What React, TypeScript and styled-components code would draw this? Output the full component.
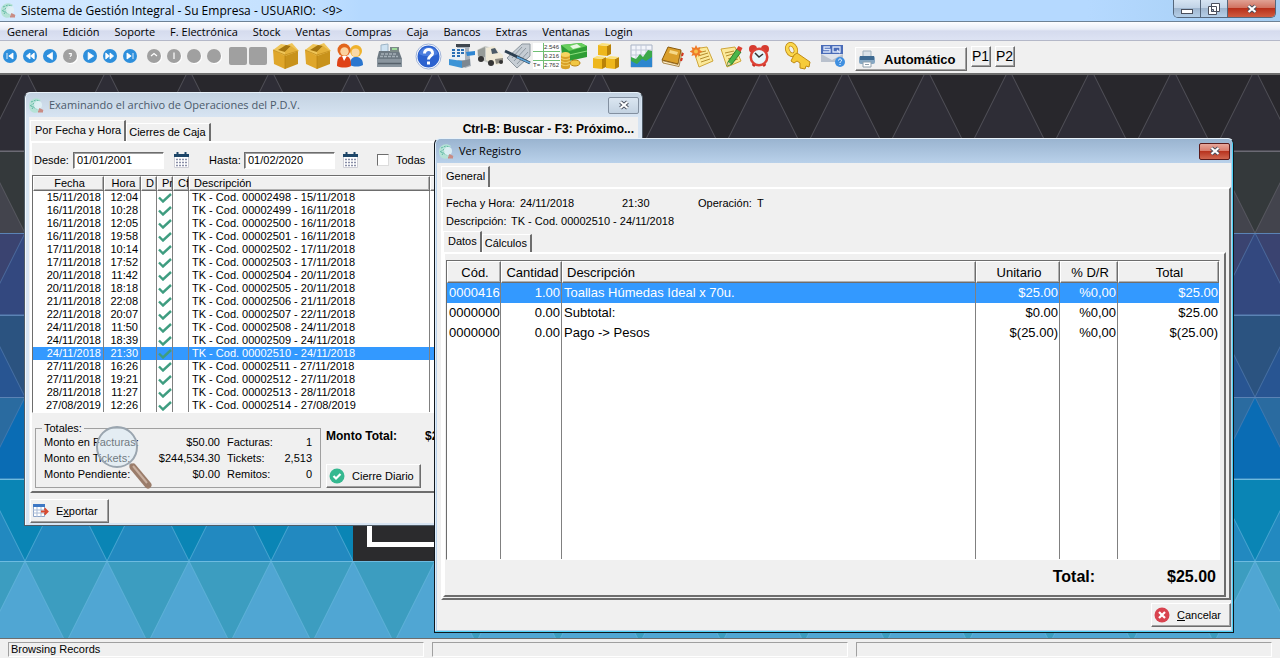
import React from "react";
import styled, { createGlobalStyle, css } from "styled-components";

const SANS = `"Liberation Sans", Arial, sans-serif`;
const SEGOE = `"Open Sans", "Segoe UI", sans-serif`;
const FACE = "#f0f0f0";
const DARK = "#6d6d6d";

const GlobalStyle = createGlobalStyle`
  *, *::before, *::after { box-sizing: border-box; }
  body { margin: 0; font-family: ${SANS}; font-size: 11px; line-height: 13px; color: #000; }
  button, input { font: inherit; color: inherit; }
  table { border-collapse: separate; border-spacing: 0; }
`;

const raised = css`
  border: 1px solid;
  border-color: #fff ${DARK} ${DARK} #fff;
  box-shadow: inset -1px -1px 0 #a0a0a0;
`;

/* ---------- Application frame ---------- */
const Shell = styled.div`
  display: flex;
  flex-direction: column;
  min-height: 100vh;
  background: ${FACE};
  overflow: hidden;
`;
const AppTitle = styled.header`
  display: flex;
  align-items: center;
  height: 22px;
  padding: 0 4px 0 0;
  gap: 4px;
  background: linear-gradient(90deg, #d3e9ff 0, #c4e1ff 300px, #b5d9ff 360px, #b5d9ff 85%, #a4cdf2 100%);
  border-bottom: 1px solid #6d8195;
  font: 12px/16px ${SEGOE};
`;
const TitleText = styled.h1`
  flex: 1;
  margin: 0;
  font: inherit;
  white-space: pre;
`;
const Controls = styled.div`
  align-self: flex-start;
  display: flex;
  height: 18px;
  border: 1px solid #55677c;
  border-top: 0;
  border-radius: 0 0 5px 5px;
  overflow: hidden;
`;
const Control = styled.button<{ $close?: boolean }>`
  display: grid;
  place-items: center;
  width: ${(p) => (p.$close ? 47 : 27)}px;
  padding: 0;
  border: 0;
  border-right: ${(p) => (p.$close ? 0 : 1)}px solid #55677c;
  background: ${(p) =>
    p.$close
      ? "linear-gradient(#e0a194 0, #d0705e 48%, #b8301b 50%, #cf5c40 100%)"
      : "linear-gradient(#d6e4f2 0, #c0d2e6 48%, #9fb6cf 50%, #b5cfe8 100%)"};
`;
const MenuBar = styled.nav`
  display: flex;
  align-items: center;
  gap: 15px;
  height: 19px;
  padding: 2px 7px 0;
  background: linear-gradient(#fdfdff 0, #e9edf7 40%, #d5dbee 50%, #dde3f3 100%);
  border-bottom: 1px solid #b4b8c8;
  font: 11px/16px ${SEGOE};
`;
const MenuItem = styled.button`
  padding: 0;
  border: 0;
  background: none;
  white-space: nowrap;
`;
const ToolBar = styled.div`
  display: flex;
  align-items: center;
  height: 34px;
  padding: 0 2px 2px;
  border-bottom: 2px solid #6d6d6d;
`;
const ToolGroup = styled.div<{ $gap?: number; $before?: number }>`
  display: flex;
  align-items: center;
  gap: ${(p) => p.$gap ?? 0}px;
  margin-left: ${(p) => p.$before ?? 0}px;
`;
const ToolButton = styled.button<{ $w: number }>`
  display: grid;
  place-items: center;
  width: ${(p) => p.$w}px;
  height: 28px;
  padding: 0;
  border: 0;
  background: none;
`;
const GreySquare = styled.button`
  width: 18px;
  height: 18px;
  padding: 0;
  border: 0;
  border-radius: 2px;
  background: #a0a0a0;
`;
const AutoButton = styled.button`
  ${raised}
  display: flex;
  align-items: center;
  gap: 8px;
  width: 112px;
  height: 24px;
  margin: 6px 0 0 10px;
  padding: 0 2px;
  background: ${FACE};
  font-weight: bold;
  font-size: 13px;
`;
const PageButton = styled.button`
  ${raised}
  width: 20px;
  height: 21px;
  padding: 0 1px 0 0;
  background: ${FACE};
  font-size: 14px;
`;

/* ---------- Desktop ---------- */
const Desktop = styled.main`
  position: relative;
  flex: 1;
  min-height: 563px;
  overflow: hidden;
  background: #3c9dc0;
`;
const WallpaperArt = styled.svg`
  position: absolute;
  inset: 0;
  width: 100%;
  height: 100%;
`;

const Window = styled.section<{ $x: number; $y: number; $w: number; $active?: boolean }>`
  position: absolute;
  left: ${(p) => p.$x}px;
  top: ${(p) => p.$y}px;
  width: ${(p) => p.$w}px;
  padding: ${(p) => (p.$active ? "0 2px 2px" : "0 4px 2px")};
  border: 1px solid ${(p) => (p.$active ? "#10161c" : "#4f5b66")};
  border-top-color: #e8f2fa;
  border-radius: 6px 6px 0 0;
  background: ${(p) => (p.$active ? "#b9d1ea" : "#d7e4f2")};
  box-shadow: ${(p) => (p.$active ? "inset -1px -1px 0 #4fd2f5, inset 1px 0 0 #dfeefb" : "inset 1px 0 0 #f2f8fd")};
`;
const WindowBar = styled.header<{ $active?: boolean }>`
  display: flex;
  align-items: center;
  gap: 4px;
  height: 24px;
  margin: 0 ${(p) => (p.$active ? -1 : -3)}px;
  padding: 0 2px;
  border-radius: 5px 5px 0 0;
  background: ${(p) => (p.$active ? "linear-gradient(#9ab4d0, #b9d1ea)" : "linear-gradient(#c3d2e1, #d7e4f2)")};
  color: ${(p) => (p.$active ? "#000" : "#4b5a6b")};
  font: 11px/16px ${SEGOE};
`;
const WindowTitle = styled.h2`
  flex: 1;
  margin: 0;
  font: inherit;
`;
const CloseButton = styled.button<{ $active?: boolean }>`
  display: grid;
  place-items: center;
  width: 31px;
  height: 17px;
  padding: 0;
  border: 1px solid ${(p) => (p.$active ? "#5a1a1a" : "#8390a0")};
  border-radius: 2px;
  background: ${(p) =>
    p.$active ? "linear-gradient(#e7a79b 0, #d97d6d 45%, #b8341f 50%, #d0664f 100%)" : "linear-gradient(#dbe6f1, #c3d2e1)"};
`;
const Client = styled.div<{ $pad: string }>`
  padding: ${(p) => p.$pad};
  background: ${FACE};
`;
const TabRow = styled.div`
  display: flex;
  align-items: flex-end;
`;
const Tab = styled.button<{ $active?: boolean }>`
  height: ${(p) => (p.$active ? 21 : 18)}px;
  padding: ${(p) => (p.$active ? "0 3px 1px 4px" : "0 3px 0 2px")};
  border: 1px solid #fff;
  border-bottom: 0;
  border-right: 2px solid ${DARK};
  background: ${FACE};
  white-space: nowrap;
`;
const Panel = styled.div<{ $pad: string }>`
  padding: ${(p) => p.$pad};
  border: 2px solid;
  border-color: #fff ${DARK} ${DARK} #fff;
`;
const Hint = styled.strong`
  margin: 0 3px 5px auto;
  font-size: 12px;
`;
const Row = styled.div<{ $gap?: number; $h?: number; $indent?: number }>`
  display: flex;
  align-items: center;
  gap: ${(p) => p.$gap ?? 0}px;
  height: ${(p) => p.$h ?? 18}px;
  padding-left: ${(p) => p.$indent ?? 0}px;
`;
const DateInput = styled.input`
  width: 91px;
  height: 17px;
  padding: 0 3px;
  border: 1px solid;
  border-color: ${DARK} #fff #fff ${DARK};
  box-shadow: inset 1px 1px 0 #a0a0a0;
  background: #fff;
`;
const CalendarButton = styled.button`
  display: grid;
  place-items: center;
  width: 16px;
  height: 18px;
  padding: 0;
  border: 0;
  background: none;
`;
const Tick = styled.input`
  appearance: none;
  width: 12px;
  height: 12px;
  margin: 0;
  border: 1px solid;
  border-color: ${DARK} #dcdcdc #dcdcdc ${DARK};
  background: #fff;
`;

/* ---------- Grids ---------- */
const GridTable = styled.table<{ $large?: boolean }>`
  table-layout: fixed;
  width: 100%;
  margin-top: 6px;
  background: #fff;
  border: 1px solid;
  border-color: ${DARK} #fff #fff ${DARK};
  font-size: ${(p) => (p.$large ? 13 : 11)}px;
  line-height: ${(p) => (p.$large ? 20 : 13)}px;
  th {
    height: ${(p) => (p.$large ? 22 : 15)}px;
    padding: 0 2px 0 4px;
    border: 1px solid;
    border-color: #fff ${DARK} ${DARK} #fff;
    box-shadow: inset -1px -1px 0 #b0b0b0;
    background: ${FACE};
    font-weight: normal;
    line-height: 13px;
    overflow: hidden;
    white-space: nowrap;
  }
  td {
    height: ${(p) => (p.$large ? 20 : 13)}px;
    padding: ${(p) => (p.$large ? "0 1px 0 2px" : "0 2px 0 3px")};
    border-right: 1px solid #808080;
    overflow: hidden;
    white-space: nowrap;
  }
  td:last-child { border-right: 0; }
`;
const DataRow = styled.tr<{ $selected?: boolean }>`
  ${(p) => p.$selected && css`background: #3399ff; color: #fff;`}
`;
const Cell = styled.td<{ $right?: boolean }>`
  text-align: ${(p) => (p.$right ? "right" : "left")};
`;
const MarkCell = styled.td`
  && { padding: 0; }
  svg { display: block; margin: 0 auto; }
`;
const Head = styled.th<{ $left?: boolean }>`
  text-align: ${(p) => (p.$left ? "left" : "center")};
`;
const Filler = styled.tr`
  td { height: 216px; }
`;

/* ---------- Totals ---------- */
const TotalsArea = styled.div`
  position: relative;
  display: flex;
  gap: 5px;
  margin-top: 9px;
  padding-left: 3px;
`;
const Totals = styled.fieldset`
  width: 286px;
  height: 66px;
  margin: 0;
  padding: 0 8px;
  border: 1px solid #a0a0a0;
  legend { padding: 0 2px; margin-left: -2px; }
`;
const TotalsGrid = styled.dl`
  display: grid;
  grid-template-columns: 92px 84px 50px 1fr;
  grid-auto-rows: 16px;
  margin: 1px 0 0;
  dt { white-space: nowrap; }
  dd { margin: 0; text-align: right; }
  dt:nth-of-type(even) { padding-left: 7px; }
`;
const Side = styled.div`
  display: flex;
  flex-direction: column;
  justify-content: space-between;
  align-items: flex-start;
  padding-top: 8px;
`;
const Amount = styled.strong`
  display: flex;
  gap: 28px;
  font-size: 12px;
`;
const ActionButton = styled.button<{ $w: number }>`
  ${raised}
  display: flex;
  align-items: center;
  gap: 7px;
  width: ${(p) => p.$w}px;
  height: 24px;
  padding: 0 2px;
  background: ${FACE};
`;
const Magnifier = styled.svg`
  position: absolute;
  left: 62px;
  top: 2px;
`;
const Footer = styled.div<{ $end?: boolean }>`
  display: flex;
  justify-content: ${(p) => (p.$end ? "flex-end" : "flex-start")};
  padding: ${(p) => (p.$end ? "3px 0 0" : "6px 0 0")};
`;
const Field = styled.span<{ $w: number }>`
  display: inline-block;
  width: ${(p) => p.$w}px;
  white-space: nowrap;
`;
const GrandTotal = styled.div`
  display: flex;
  justify-content: flex-end;
  gap: 72px;
  padding: 7px 4px 8px 0;
  font: bold 16px/20px ${SANS};
`;

/* ---------- Status bar ---------- */
const StatusBar = styled.footer`
  display: flex;
  gap: 8px;
  height: 21px;
  padding: 3px 8px 2px;
  border-top: 1px solid #6d6d6d;
`;
const StatusCell = styled.div`
  flex: 1;
  padding: 0 2px;
  border: 1px solid;
  border-color: #a0a0a0 #fff #fff #a0a0a0;
`;

/* ---------- Drawings ---------- */
const ROWS = [
  { base: "#28272c", tri: "#2e2d36", up: true },
  { base: "#43444d", tri: "#34393b", up: false },
  { base: "#3a4370", tri: "#33487f", up: true },
  { base: "#285592", tri: "#2b5380", up: false },
  { base: "#2a6ba0", tri: "#0a6cb4", up: true },
  { base: "#2289c0", tri: "#0a85b5", up: false },
  { base: "#3c9dc0", tri: "#50a6d3", up: true },
];
const COLS = Array.from({ length: 32 }, (_, i) => i * 82 - 57);

function Wallpaper() {
  return (
    <WallpaperArt aria-hidden="true">
      {ROWS.map((r, i) => {
        const top = i * 82 - 6;
        const line = i < 2 ? "#6b6a74" : i < 5 ? "#5b83b5" : "#6dbbe0";
        return (
          <g key={i}>
            <rect x="0" y={top} width="100%" height="82" fill={r.base} />
            {COLS.map((x) => (
              <polygon
                key={x}
                points={r.up ? `${x},${top} ${x + 41},${top + 82} ${x - 41},${top + 82}` : `${x},${top + 82} ${x + 41},${top} ${x - 41},${top}`}
                fill={r.tri}
                stroke={line}
                strokeWidth="1"
                strokeOpacity="0.6"
              />
            ))}
            <rect x="0" y={top} width="100%" height="1" fill={line} />
          </g>
        );
      })}
      <rect x="353" y="380" width="300" height="106" fill="#2b2b2d" />
      <path d="M369.500 380V469.500H640" fill="none" stroke="#fff" strokeWidth="5" />
    </WallpaperArt>
  );
}

const AppLogo = () => (
  <svg width="17" height="17" viewBox="0 0 17 17" aria-hidden="true">
    <path d="M13 3C8-1 1 2 1 8.500S6 17 11 15L9 8z" fill="#b5e2d6" />
    <path d="M3 5l5-2 4 1M2 9l6-4M4 12l5-7M3 9l6 3" stroke="#5fb8a4" strokeWidth="1" fill="none" strokeDasharray="2 1" />
    <circle cx="10" cy="8" r="4" fill="#e0f1f5" opacity=".9" />
    <path d="M11 12l4 2M10 14.500h5" stroke="#c98c84" strokeWidth="2" />
  </svg>
);

const Cross = () => (
  <svg width="12" height="10" viewBox="0 0 12 10" aria-hidden="true">
    <path d="M2.500 2l7 6M9.500 2l-7 6" stroke="#4a4f5c" strokeWidth="4" />
    <path d="M2.500 2l7 6M9.500 2l-7 6" stroke="#fff" strokeWidth="2.200" />
  </svg>
);

const NAV: Record<string, string> = {
  first: "M4.500 4.500v5M9.500 4.500L6 7l3.500 2.500z",
  back: "M7 4.500L4 7l3 2.500zM10.500 4.500L7.500 7l3 2.500z",
  prev: "M9 4L4.500 7 9 10z",
  ask: "M6 5h2v1.500L7 7.500M7 9v.5",
  next: "M5.500 4L10 7l-4.500 3z",
  fwd: "M3.500 4.500L6.500 7l-3 2.500zM7 4.500L10 7 7 9.500z",
  last: "M9.500 4.500v5M4.500 4.500L8 7 4.500 9.500z",
  up: "M4.500 7L7 5l2.500 2",
  down: "M6.500 4.500h.5v5",
  dot: "",
};
const NavIcon = ({ kind, grey }: { kind: string; grey?: boolean }) => {
  const outline = kind === "ask" || kind === "up" || kind === "down";
  return (
    <svg width="16" height="16" viewBox="0 0 16 16" aria-hidden="true">
      {grey && <circle cx="9" cy="9" r="7" fill="#fff" />}
      <circle cx="8" cy="8" r="7" fill={grey ? "#a0a0a0" : "#2e8fdc"} />
      <path transform="translate(-.4 -.4) scale(1.2)" d={NAV[kind]} fill={outline ? "none" : "#fff"} stroke="#fff" strokeWidth={outline ? 1 : 0.7} />
    </svg>
  );
};

const BoxIcon = () => (
  <svg width="28" height="28" viewBox="0 0 28 28">
    <path d="M1 8l12 5v14L2 22z" fill="#dfa62a" />
    <path d="M13 13l13-4v13l-13 5z" fill="#c8921b" />
    <path d="M1 8L9 2l6 1 5-2 7 8-14 5z" fill="#efc558" />
    <path d="M6 8l8-5 5 1-6 6z" fill="#a3740f" />
    <path d="M13 10l6-6 7 5-13 4z" fill="#e4b13a" />
    <path d="M1 8l12 5 13-4M13 13v14" stroke="#b98210" fill="none" strokeOpacity=".7" />
  </svg>
);
const PeopleIcon = () => (
  <svg width="28" height="26" viewBox="0 0 28 26">
    <circle cx="20" cy="8" r="6" fill="#efb22c" />
    <circle cx="19.500" cy="9.500" r="4" fill="#f9d9a6" />
    <path d="M14 22c0-7 3-8 6-8s7 1 7 8c-4 2-9 2-13 0z" fill="#2b76cf" />
    <circle cx="8" cy="7" r="6.500" fill="#e2661c" />
    <circle cx="8.500" cy="8.500" r="4.200" fill="#fbd3a0" />
    <path d="M1 23c0-8 2-10 7-10s7 2 7 10c-4 2-10 2-14 0z" fill="#df4216" />
    <path d="M6 13l2 5 3-5z" fill="#fff" />
  </svg>
);
const RegisterIcon = () => (
  <svg width="28" height="26" viewBox="0 0 28 26">
    <path d="M5 9V2l7-1v8z" fill="#cfe3f2" stroke="#9db4c6" />
    <path d="M3 8h20l3 8v8H1v-8z" fill="#6d7982" />
    <path d="M14 4h9v5h-9z" fill="#7c8a88" />
    <path d="M16 5h5v2h-5z" fill="#9edb9a" />
    <path d="M5 11h16M4 13.500h18" stroke="#a5b0b8" strokeWidth="1.500" strokeDasharray="3 1" />
    <path d="M1 16h25v8H1z" fill="#8a959e" />
    <path d="M2 20.500h23" stroke="#56616a" strokeWidth="1.500" />
  </svg>
);
const HelpIcon = () => (
  <svg width="27" height="27" viewBox="0 0 27 27">
    <circle cx="13.500" cy="13.500" r="12.500" fill="#fff" stroke="#9fb3d8" />
    <circle cx="13.500" cy="13.500" r="11" fill="#2c62cf" />
    <path d="M4 11c2-9 17-9 19 0-5 3-14 3-19 0z" fill="#5a8ae6" opacity=".7" />
    <path d="M9.500 10.500c0-5.500 8.500-5.500 8 0-.3 2.500-4 2.500-4 6M13.500 18.500v3" stroke="#fff" strokeWidth="3" fill="none" />
  </svg>
);
const PosIcon = () => (
  <svg width="28" height="26" viewBox="0 0 28 26">
    <path d="M9 1h13l-1 6 2 16-6 2-8-8z" fill="#a9b1ba" />
    <path d="M8 1h14v3H8z" fill="#3f464e" />
    <path d="M3 5h14v12H3z" fill="#e9eff4" />
    <path d="M4 7h3M9 7h3M13 7h3M4 10h3M9 10h3M13 10h3M4 13h3M9 13h3" stroke="#2b6fb4" strokeWidth="2" />
    <path d="M1 16l13 2v7L1 22z" fill="#3d94d6" />
    <path d="M14 18l8-2v6l-8 3z" fill="#7d8791" />
    <path d="M18 9l9-1v4l-8 1z" fill="#2f86d2" />
  </svg>
);
const TruckIcon = () => (
  <svg width="28" height="24" viewBox="0 0 28 24">
    <path d="M1 6l8-4 8 2v12l-5 3L2 14z" fill="#c9cbc6" />
    <path d="M2 6l7-3v10l-7-1z" fill="#979c98" />
    <path d="M10 4l8-2 5 6 4 3v8l-6 2-11-5z" fill="#efe9d6" />
    <path d="M15 5l4-1 3 5-6 1z" fill="#4c5a66" />
    <circle cx="15" cy="19" r="3" fill="#353535" />
    <circle cx="5" cy="15" r="3" fill="#353535" />
    <path d="M19 15l8-1v4l-7 2z" fill="#8d8a80" />
    <circle cx="25" cy="18" r="2" fill="#333" />
  </svg>
);
const CheckIcon = () => (
  <svg width="28" height="26" viewBox="0 0 28 26">
    <path d="M3 15L18 1h8v12L13 25z" fill="#c6cdd4" stroke="#8d979f" />
    <path d="M8 15l10-11M10 18L22 5M13 21L24 9" stroke="#8f99a2" />
    <path d="M1 8l25 12" stroke="#2d3f50" strokeWidth="3" />
    <path d="M13 14l13 6" stroke="#5fa7dc" strokeWidth="1.500" />
  </svg>
);
const SumIcon = () => (
  <svg width="27" height="26" viewBox="0 0 27 26" fontFamily="Liberation Sans" fontSize="6" fill="#333">
    <rect width="27" height="26" fill="#fff" />
    <path d="M0 8.500h27M0 17.500h27M10.500 0v26" stroke="#6fbf73" />
    <text x="11" y="6">2.546</text>
    <text x="11" y="15">0.216</text>
    <text x="0" y="24">T=</text>
    <text x="11" y="24">2.762</text>
  </svg>
);
const MoneyIcon = () => (
  <svg width="28" height="27" viewBox="0 0 28 27">
    <path d="M1 2l20-2 6 3v11l-18 4-7-5z" fill="#2f9d35" />
    <path d="M1 2l20-2 6 3-18 5z" fill="#68cf5d" />
    <path d="M10 3l7-2 4 3-8 2z" fill="#e9f8e3" />
    <path d="M9 12l18-4" stroke="#8ee07f" />
    <path d="M1 12c0-3 9-3 9 0v12c0 3-9 3-9 0z" fill="#d9a127" />
    <path d="M1 15c2 2 7 2 9 0M1 18c2 2 7 2 9 0M1 21c2 2 7 2 9 0" stroke="#f3d36a" fill="none" />
    <ellipse cx="15" cy="20" rx="5" ry="3" fill="#f1c744" stroke="#b98210" />
    <ellipse cx="5.500" cy="11.500" rx="4.500" ry="2.500" fill="#f7d560" />
  </svg>
);
const CratesIcon = () => (
  <svg width="28" height="26" viewBox="0 0 28 26">
    {[[6, 0], [1, 13], [14, 13]].map(([x, y]) => (
      <g key={x} transform={`translate(${x} ${y})`}>
        <path d="M0 2l9 1v10l-9-1z" fill="#eeb71c" />
        <path d="M9 3l4-2v10l-4 2z" fill="#b98208" />
        <path d="M0 2l4-2 9 1-4 2z" fill="#fbe17a" />
      </g>
    ))}
  </svg>
);
const ChartIcon = () => (
  <svg width="23" height="24" viewBox="0 0 23 24">
    <path d="M1 1h21v22H1z" fill="#f3f5fb" stroke="#a8b2c4" />
    <path d="M6 1v14M11 1v14M16 1v14M1 6h21M1 11h21" stroke="#c2c9d8" />
    <path d="M1 15l5 2 5-4 5 1 6-5v14H1z" fill="#2c86cf" />
    <path d="M1 13l5 2 4-5 3 3 5-7 4 1v6l-6 4-4-2-5 5-6-3z" fill="#3ba94a" />
  </svg>
);
const BookIcon = () => (
  <svg width="24" height="22" viewBox="0 0 24 22">
    <path d="M7 2l13 3-3 14-16-4z" fill="#dba02c" stroke="#8a5a0c" />
    <path d="M1 15.500l16 4 3-13 1 1-3 14L2 18z" fill="#fff2cf" stroke="#8a5a0c" strokeWidth=".7" />
    <path d="M9 5l8 2-1 3-8-2z" fill="#f6d98a" />
    <path d="M22 8l-1 3M21 13l-1 3" stroke="#d5341e" strokeWidth="2" fill="none" />
  </svg>
);
const NoteIcon = ({ pencil }: { pencil?: boolean }) => (
  <svg width="25" height="23" viewBox="0 0 25 23">
    <path d="M3 4l14-2 6 14-14 6z" fill="#fbe99a" stroke="#cfa63a" />
    <path d="M7 8l9-2M8 11l10-3M10 14l9-3M11 17l9-3" stroke="#b58d2d" />
    {pencil ? (
      <>
        <path d="M10 17l9-13 4 3-9 12-5 2z" fill="#4cb648" stroke="#2d7d2b" />
        <path d="M18.500 4l2-3 4 2-2 4z" fill="#dc4030" />
        <path d="M10 17l-1 4 4-2z" fill="#f2d2a0" />
      </>
    ) : (
      <>
        <path d="M6 0l1.500 3 3-1-1 3 3 1.500-3 1.500 1 3-3-1L6 13l-1.500-3-3 1 1-3-3-1.500 3-1.500-1-3 3 1z" fill="#ef7b29" />
        <circle cx="6" cy="6.500" r="2" fill="#f7c04b" />
      </>
    )}
  </svg>
);
const ClockIcon = () => (
  <svg width="22" height="24" viewBox="0 0 22 24">
    <circle cx="5" cy="5" r="4" fill="#d63b2f" />
    <circle cx="17" cy="5" r="4" fill="#d63b2f" />
    <path d="M5 22l3-4M17 22l-3-4" stroke="#c4281e" strokeWidth="3" />
    <circle cx="11" cy="13" r="9.500" fill="#dd4337" />
    <circle cx="11" cy="13" r="7" fill="#e6f6fb" />
    <path d="M7 9l4 4 4-3" stroke="#333" strokeWidth="1.500" fill="none" />
  </svg>
);
const KeyIcon = () => (
  <svg width="28" height="28" viewBox="0 0 28 28">
    <ellipse cx="7.500" cy="7.500" rx="4" ry="5.500" transform="rotate(-25 7.500 7.500)" fill="none" stroke="#c08b14" strokeWidth="4.500" />
    <ellipse cx="7.500" cy="7.500" rx="4" ry="5.500" transform="rotate(-25 7.500 7.500)" fill="none" stroke="#fbd84e" strokeWidth="3" />
    <path d="M10 13l3-2 13 9-1 5-3-1-1 3-5-1v-5l-3-2-3 2-3-2z" fill="#f6cb3a" stroke="#c08b14" />
  </svg>
);
const SupportIcon = () => (
  <svg width="25" height="24" viewBox="0 0 25 24">
    <path d="M0 9h22v9H0z" fill="#b9c1cd" />
    <path d="M0 10l11 6 11-6" fill="#dfe4ec" />
    <path d="M0 1h22v9H0z" fill="#4a6cb8" />
    <path d="M9 3H3v2.500h6V8H2M12 3h7v5h-7zM16 6l3 3" stroke="#dce6fa" fill="none" strokeWidth="1.300" />
    <circle cx="19" cy="18" r="5" fill="#3f8fe0" />
    <path d="M17.500 16.500c0-2 3-2 3 0 0 1-1.500 1-1.500 2.500M19 20v1" stroke="#fff" fill="none" />
  </svg>
);
const PrinterIcon = () => (
  <svg width="18" height="18" viewBox="0 0 18 18" aria-hidden="true">
    <path d="M5 1h8v6H5z" fill="#dbe3e9" stroke="#9fb0bd" />
    <rect x="1" y="6" width="16" height="8" rx="2" fill="#86a7c2" />
    <path d="M2 6h14v4H2z" fill="#3e6a91" />
    <path d="M5 12h8v5H5z" fill="#fff" stroke="#8fa0ad" />
    <path d="M7 14.500h4" stroke="#8fa0ad" />
  </svg>
);
const CalendarIcon = () => (
  <svg width="15" height="16" viewBox="0 0 15 16" aria-hidden="true">
    <path d="M0 2h15v3H0z" fill="#1e4668" />
    <path d="M3.500 0v3M11.500 0v3" stroke="#1e4668" strokeWidth="2" />
    <path d="M.5 5v10.500h14V5" fill="#fff" stroke="#cfcfd6" />
    <path d="M2 7.500h11M2 10.500h11M2 13.500h11" stroke="#8a8fa8" strokeWidth="1.500" strokeDasharray="2 1" />
  </svg>
);
const GreenTick = () => (
  <svg width="14" height="10" viewBox="0 0 14 10" aria-label="Sí">
    <path d="M1 4.500l4 4L13 1" fill="none" stroke="#3f9d80" strokeWidth="2.400" />
  </svg>
);
const Badge = ({ ok }: { ok?: boolean }) => (
  <svg width="16" height="16" viewBox="0 0 16 16" aria-hidden="true">
    <circle cx="8" cy="8" r="7.500" fill={ok ? "#35b890" : "#d8434f"} />
    <path d={ok ? "M4.500 8l2.500 2.500L11.500 6" : "M5 5l6 6M11 5l-6 6"} stroke="#fff" strokeWidth="2.200" fill="none" />
  </svg>
);
const ExportIcon = () => (
  <svg width="16" height="14" viewBox="0 0 16 14" aria-hidden="true">
    <path d="M.5.5h11v12H.5z" fill="#fff" stroke="#8ca4c8" />
    <path d="M0 0h12v3H0z" fill="#3e78c4" />
    <path d="M0 6h12M0 9h12M4 3v10M8 3v10" stroke="#a9bbd6" />
    <path d="M8 7.500h5M11.500 4.500l3 3-3 3" stroke="#d8492f" strokeWidth="2" fill="none" />
  </svg>
);

/* ---------- Data ---------- */
const MENUS = ["General", "Edición", "Soporte", "F. Electrónica", "Stock", "Ventas", "Compras", "Caja", "Bancos", "Extras", "Ventanas", "Login"];
const TOOLS: { name: string; w: number; before: number; icon: React.ReactNode }[] = [
  { name: "Artículos", w: 28, before: 5, icon: <BoxIcon /> },
  { name: "Depósito", w: 28, before: 4, icon: <BoxIcon /> },
  { name: "Clientes", w: 28, before: 4, icon: <PeopleIcon /> },
  { name: "Caja", w: 28, before: 12, icon: <RegisterIcon /> },
  { name: "Ayuda", w: 28, before: 10, icon: <HelpIcon /> },
  { name: "Punto de venta", w: 28, before: 6, icon: <PosIcon /> },
  { name: "Remitos", w: 28, before: 0, icon: <TruckIcon /> },
  { name: "Cheques", w: 28, before: 0, icon: <CheckIcon /> },
  { name: "Sumas", w: 28, before: 0, icon: <SumIcon /> },
  { name: "Pagos", w: 28, before: 0, icon: <MoneyIcon /> },
  { name: "Stock", w: 28, before: 4, icon: <CratesIcon /> },
  { name: "Estadísticas", w: 24, before: 9, icon: <ChartIcon /> },
  { name: "Agenda", w: 24, before: 8, icon: <BookIcon /> },
  { name: "Notas", w: 24, before: 5, icon: <NoteIcon /> },
  { name: "Editar", w: 24, before: 4, icon: <NoteIcon pencil /> },
  { name: "Alarma", w: 24, before: 5, icon: <ClockIcon /> },
  { name: "Claves", w: 28, before: 13, icon: <KeyIcon /> },
  { name: "Soporte", w: 24, before: 9, icon: <SupportIcon /> },
];
const OPERATIONS: [string, string, string][] = [
  ["15/11/2018", "12:04", "00002498"],
  ["16/11/2018", "10:28", "00002499"],
  ["16/11/2018", "12:05", "00002500"],
  ["16/11/2018", "19:58", "00002501"],
  ["17/11/2018", "10:14", "00002502"],
  ["17/11/2018", "17:52", "00002503"],
  ["20/11/2018", "11:42", "00002504"],
  ["20/11/2018", "18:18", "00002505"],
  ["21/11/2018", "22:08", "00002506"],
  ["22/11/2018", "20:07", "00002507"],
  ["24/11/2018", "11:50", "00002508"],
  ["24/11/2018", "18:39", "00002509"],
  ["24/11/2018", "21:30", "00002510"],
  ["27/11/2018", "16:26", "00002511"],
  ["27/11/2018", "19:21", "00002512"],
  ["28/11/2018", "11:27", "00002513"],
  ["27/08/2019", "12:26", "00002514"],
];
const LINES = [
  ["0000416", "1.00", "Toallas Húmedas Ideal x 70u.", "$25.00", "%0,00", "$25.00"],
  ["0000000", "0.00", "Subtotal:", "$0.00", "%0,00", "$25.00"],
  ["0000000", "0.00", "Pago -> Pesos", "$(25.00)", "%0,00", "$(25.00)"],
];

/* ---------- Windows ---------- */
function OperationsWindow() {
  return (
    <Window $x={24} $y={17} $w={619}>
      <WindowBar>
        <AppLogo />
        <WindowTitle>Examinando el archivo de Operaciones del P.D.V.</WindowTitle>
        <CloseButton aria-label="Cerrar"><Cross /></CloseButton>
      </WindowBar>
      <Client $pad="3px 1px 0">
        <TabRow>
          <Tab $active>Por Fecha y Hora</Tab>
          <Tab>Cierres de Caja</Tab>
          <Hint>Ctrl-B: Buscar - F3: Próximo...</Hint>
        </TabRow>
        <Panel $pad="8px 0 3px">
          <Row $indent={2}>
            <Row as="label" $gap={4}><Field $w={35}>Desde:</Field><DateInput defaultValue="01/01/2001" /></Row>
            <ToolGroup $before={9}><CalendarButton aria-label="Elegir fecha desde"><CalendarIcon /></CalendarButton></ToolGroup>
            <ToolGroup $before={20}>
              <Row as="label" $gap={4}><Field $w={31}>Hasta:</Field><DateInput defaultValue="01/02/2020" /></Row>
            </ToolGroup>
            <ToolGroup $before={7}><CalendarButton aria-label="Elegir fecha hasta"><CalendarIcon /></CalendarButton></ToolGroup>
            <ToolGroup $before={19}><Row as="label" $gap={7}><Tick type="checkbox" />Todas</Row></ToolGroup>
          </Row>
          <GridTable>
            <colgroup>
              <col width="71" /><col width="37" /><col width="16" /><col width="16" /><col width="16" /><col width="241" /><col />
            </colgroup>
            <thead>
              <tr>
                <Head>Fecha</Head><Head>Hora</Head><Head>D</Head><Head $left>Pr</Head><Head $left>Cf</Head><Head $left>Descripción</Head><Head />
              </tr>
            </thead>
            <tbody>
              {OPERATIONS.map(([date, time, code], i) => (
                <DataRow key={code} $selected={i === 12}>
                  <Cell $right>{date}</Cell>
                  <Cell $right>{time}</Cell>
                  <Cell />
                  <MarkCell><GreenTick /></MarkCell>
                  <Cell />
                  <Cell>{`TK - Cod. ${code} - ${date}`}</Cell>
                  <Cell />
                </DataRow>
              ))}
            </tbody>
          </GridTable>
          <TotalsArea>
            <Totals>
              <legend>Totales:</legend>
              <TotalsGrid>
                <dt>Monto en Facturas:</dt><dd>$50.00</dd><dt>Facturas:</dt><dd>1</dd>
                <dt>Monto en Tickets:</dt><dd>$244,534.30</dd><dt>Tickets:</dt><dd>2,513</dd>
                <dt>Monto Pendiente:</dt><dd>$0.00</dd><dt>Remitos:</dt><dd>0</dd>
              </TotalsGrid>
            </Totals>
            <Side>
              <Amount><span>Monto Total:</span><span>$244,584.30</span></Amount>
              <ActionButton $w={95}><Badge ok />Cierre Diario</ActionButton>
            </Side>
            <Magnifier width="62" height="68" viewBox="0 0 62 68" aria-hidden="true">
              <path d="M36 40l6 6" stroke="#999" strokeWidth="3" />
              <path d="M39 43l15 18" stroke="#9b7d6b" strokeWidth="7" strokeLinecap="round" />
              <path d="M39 42l14 17" stroke="#c9b0a0" strokeWidth="2" />
              <circle cx="23" cy="23" r="20" fill="#d8eaf6" fillOpacity=".5" stroke="#9aa5af" strokeWidth="2" />
            </Magnifier>
          </TotalsArea>
        </Panel>
        <Footer>
          <ActionButton $w={79}><ExportIcon /><span>E<u>x</u>portar</span></ActionButton>
        </Footer>
      </Client>
    </Window>
  );
}

function RecordWindow() {
  return (
    <Window $x={434} $y={63} $w={800} $active>
      <WindowBar $active>
        <AppLogo />
        <WindowTitle>Ver Registro</WindowTitle>
        <CloseButton $active aria-label="Cerrar"><Cross /></CloseButton>
      </WindowBar>
      <Client $pad="3px 0 3px 4px">
        <TabRow><Tab $active>General</Tab></TabRow>
        <Panel $pad="5px 3px 1px 0">
          <Row $h={18} $indent={3}>
            <Field $w={74}>Fecha y Hora:</Field><Field $w={102}>24/11/2018</Field><Field $w={76}>21:30</Field>
            <Field $w={59}>Operación:</Field><Field $w={20}>T</Field>
          </Row>
          <Row $h={19} $indent={3}><Field $w={65}>Descripción:</Field>TK - Cod. 00002510 - 24/11/2018</Row>
          <TabRow><Tab $active>Datos</Tab><Tab>Cálculos</Tab></TabRow>
          <Panel $pad="0 4px 0 1px">
            <GridTable $large>
              <colgroup>
                <col width="54" /><col width="61" /><col /><col width="84" /><col width="58" /><col width="101" />
              </colgroup>
              <thead>
                <tr>
                  <Head>Cód.</Head><Head>Cantidad</Head><Head $left>Descripción</Head><Head>Unitario</Head><Head>% D/R</Head><Head>Total</Head>
                </tr>
              </thead>
              <tbody>
                {LINES.map((cells, i) => (
                  <DataRow key={i} $selected={i === 0}>
                    {cells.map((c, j) => <Cell key={j} $right={j !== 2}>{c}</Cell>)}
                  </DataRow>
                ))}
                <Filler>{LINES[0].map((_, j) => <td key={j} />)}</Filler>
              </tbody>
            </GridTable>
            <GrandTotal><span>Total:</span><span>$25.00</span></GrandTotal>
          </Panel>
        </Panel>
        <Footer $end>
          <ActionButton $w={80}><Badge /><span><u>C</u>ancelar</span></ActionButton>
        </Footer>
      </Client>
    </Window>
  );
}

export default function App() {
  return (
    <Shell>
      <GlobalStyle />
      <AppTitle>
        <AppLogo />
        <TitleText>{"Sistema de Gestión Integral - Su Empresa - USUARIO:  <9>"}</TitleText>
        <Controls>
          <Control aria-label="Minimizar">
            <svg width="12" height="10" viewBox="0 0 12 10"><rect x=".5" y="5.500" width="11" height="4" fill="#fff" stroke="#4a4f5c" /></svg>
          </Control>
          <Control aria-label="Restaurar">
            <svg width="12" height="12" viewBox="0 0 12 12"><path d="M3.500.5h8v8h-8zM.5 3.500h8v8h-8z" fill="#fff" stroke="#4a4f5c" /><path d="M3.500 6.500h2v2h-2z" fill="#9fb6cf" stroke="#4a4f5c" /></svg>
          </Control>
          <Control $close aria-label="Cerrar"><Cross /></Control>
        </Controls>
      </AppTitle>
      <MenuBar>{MENUS.map((m) => <MenuItem key={m}>{m}</MenuItem>)}</MenuBar>
      <ToolBar>
        <ToolGroup $gap={4}>
          {["first", "back", "prev", "ask", "next", "fwd", "last"].map((k) => (
            <ToolButton key={k} $w={16} aria-label={k}><NavIcon kind={k} grey={k === "ask"} /></ToolButton>
          ))}
        </ToolGroup>
        <ToolGroup $gap={4} $before={8}>
          {["up", "down", "dot", "dot"].map((k, i) => (
            <ToolButton key={i} $w={16} aria-label={k}><NavIcon kind={k} grey /></ToolButton>
          ))}
        </ToolGroup>
        <ToolGroup $gap={2} $before={7}><GreySquare aria-label="Marcar" /><GreySquare aria-label="Desmarcar" /></ToolGroup>
        {TOOLS.map((t) => (
          <ToolGroup key={t.name} $before={t.before}>
            <ToolButton $w={t.w} aria-label={t.name}>{t.icon}</ToolButton>
          </ToolGroup>
        ))}
        <AutoButton><PrinterIcon />Automático</AutoButton>
        <ToolGroup $gap={4} $before={4}><PageButton>P1</PageButton><PageButton>P2</PageButton></ToolGroup>
      </ToolBar>
      <Desktop>
        <Wallpaper />
        <OperationsWindow />
        <RecordWindow />
      </Desktop>
      <StatusBar>
        <StatusCell>Browsing Records</StatusCell>
        <StatusCell />
        <StatusCell />
      </StatusBar>
    </Shell>
  );
}
